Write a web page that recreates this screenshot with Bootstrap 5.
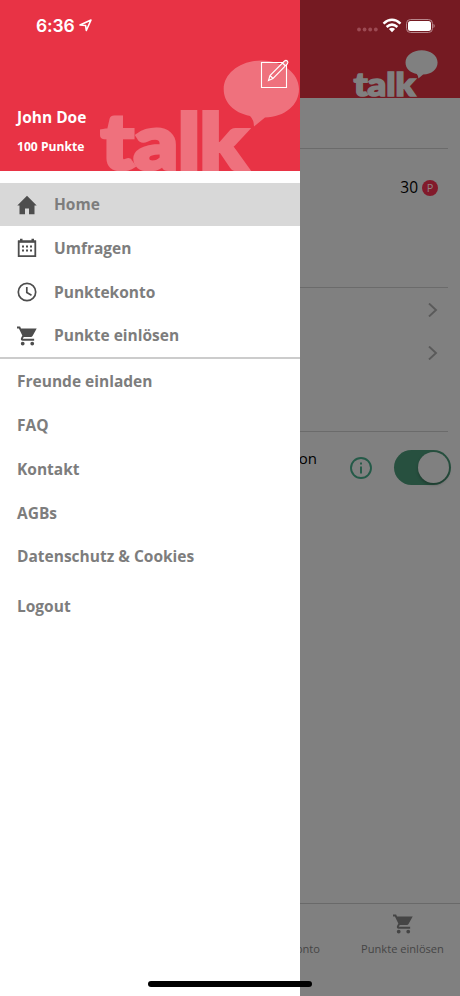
<!DOCTYPE html>
<html lang="de">
<head>
<meta charset="utf-8">
<meta name="viewport" content="width=device-width, initial-scale=1">
<title>talk</title>
<link rel="stylesheet" href="https://cdn.jsdelivr.net/npm/bootstrap@5.3.0/dist/css/bootstrap.min.css">
<style>
body{font-family:"Open Sans",sans-serif;color:#000;line-height:1.2}
svg{display:block;flex:none}
.app{width:460px;height:996px}
.statusbar{top:0;left:0;height:50px;padding:1px 24px 0 36px}
.clock{font:600 17.5px/20px Inter,"Liberation Sans",sans-serif;letter-spacing:-.1px}
.drawer{width:300px;background:#fff}
.profile{height:171px;background:#e83345;padding:0 0 17px 17px}
.profile-name{font-size:15.5px;line-height:20px;margin-bottom:11px}
.profile-points{font-size:12.1px;line-height:16px;position:relative;top:.5px}
.logo-word{font-family:Lato,"Open Sans",sans-serif;font-weight:900;font-size:76px;fill:currentColor;stroke:currentColor;stroke-width:4px}
.watermark{left:98px;top:59px}
.edit-btn{left:259px;top:58px}
.menu{padding-top:11.7px}
.menu-link{height:43.7px;padding:0 17px;font-size:15.5px;font-weight:700;color:#7d7d7d;text-decoration:none;gap:17px}
.menu-link.active{background:#d8d8d8}
.menu-link svg{color:#4d4d4d}
.menu-rule{height:1.5px;background:#ccc;margin-bottom:1px}
.logout{margin-top:6px}
.screen{width:160px;background:#808080}
.brandbar{height:98px;background:#751a22;padding:49px 22px 0 0}
.section-line{border-bottom:1px solid #6b6b6b;margin-right:12px}
.sec-empty{height:51px}
.sec-points{height:139px;padding:29px 10px 0 0;font-size:15.5px;gap:4px}
.sec-links{height:144px;padding-right:10px}
.link-line{height:43.5px}
.sec-toggle{height:71px;padding-right:9px}
.toggle-label{font-size:15px;width:17px;margin-top:-19px}
.toggle{width:57px;height:35px;border-radius:18px;background:#27503f;padding:2px;margin-left:22px}
.knob{width:31px;height:31px;border-radius:50%;background:#808080;box-shadow:0 2px 3px rgba(0,0,0,.25)}
.coin{width:16px;height:16px;border-radius:50%;background:#821a2b;color:#918184;font-size:11px;line-height:16px;margin-top:2px}
.tabs{height:93px;border-top:1px solid #696969;font-size:11.1px;color:#454545;padding-top:10px}
.tab-left{width:20px;padding-top:28px}
.tab-right{width:115px;gap:8px}
.home-indicator{left:148px;top:981px;width:164px;height:6px;border-radius:3px;background:#000}
</style>
<script src="https://cdn.jsdelivr.net/npm/bootstrap@5.3.0/dist/js/bootstrap.bundle.min.js"></script>
</head>
<body>
<svg width="0" height="0" class="position-absolute" aria-hidden="true">
  <symbol id="cart" viewBox="1 2 21 20"><path fill="currentColor" d="M7 18a2 2 0 1 0 0 4 2 2 0 0 0 0-4zM1 2v2h2l3.600 7.590-1.350 2.450C4.520 15.370 5.480 17 7 17h12v-2H7.420a.25.25 0 0 1-.25-.25l.93-1.750h7.450c.75 0 1.410-.41 1.750-1.030L21.700 4H5.210l-.94-2H1zm16 16a2 2 0 1 0 0 4 2 2 0 0 0 0-4z"/></symbol>
</svg>
<div class="app d-flex position-relative overflow-hidden">
  <aside class="drawer d-flex flex-column">
    <header class="profile position-relative overflow-hidden d-flex flex-column justify-content-end text-white fw-bold">
      <svg class="watermark position-absolute" width="202" height="113" viewBox="0 0 202 113" color="#fff" opacity=".3">
        <text class="logo-word" x="3" y="109.500" textLength="146" lengthAdjust="spacingAndGlyphs">talk</text>
        <path fill="currentColor" d="M163.500 1.500C184 1.500 201 14 201 30S187 58 167 58.500L156 67.500Q156 61 152 57C135 53.500 125.700 43 125.700 30 125.700 14 143 1.500 163.500 1.500z"/>
      </svg>
      <div class="profile-name">John Doe</div>
      <div class="profile-points">100 Punkte</div>
      <svg class="edit-btn position-absolute" width="32" height="32" fill="none" stroke="#fff" stroke-width="1.100"><path d="M2.500 4.500h25v25h-25z"/><path fill="#ee6d7a" d="M9.500 22.500l1.500-5L25.500 3q1.500-1.200 2.800 0t0 3L14 20.500zM11 17.500l3 3M23.500 5l3 3"/></svg>
    </header>
    <nav class="menu d-flex flex-column">
      <a class="menu-link active d-flex align-items-center" href="#"><svg width="20" height="20" viewBox="0 0 20 20"><path fill="currentColor" d="M10 .8l9.700 9.700h-2.200V19.200H12V13.500H8v5.700H2.500v-8.700H.3z"/></svg>Home</a>
      <a class="menu-link d-flex align-items-center" href="#"><svg width="20" height="20" viewBox="0 0 20 20"><path fill="none" stroke="currentColor" stroke-width="1.800" d="M1.700 3.300h16.600v14.800H1.700z"/><path fill="currentColor" d="M3 .8h2.500v3H3zM14.500.8H17v3h-2.500zM1 2.500h18v2.200H1zM5 7.500h2v2H5zm4 0h2v2H9zm4 0h2v2h-2zM5 11.500h2v2H5zm4 0h2v2H9zm4 0h2v2h-2z"/></svg>Umfragen</a>
      <a class="menu-link d-flex align-items-center" href="#"><svg width="20" height="20" viewBox="0 0 20 20" fill="none" stroke="currentColor" stroke-width="1.700"><circle cx="10" cy="10" r="8.700"/><path d="M9.800 5v5.500l4.700 2.700"/></svg>Punktekonto</a>
      <a class="menu-link d-flex align-items-center" href="#"><svg width="20" height="20"><use href="#cart"/></svg>Punkte einlösen</a>
      <div class="menu-rule"></div>
      <a class="menu-link d-flex align-items-center" href="#">Freunde einladen</a>
      <a class="menu-link d-flex align-items-center" href="#">FAQ</a>
      <a class="menu-link d-flex align-items-center" href="#">Kontakt</a>
      <a class="menu-link d-flex align-items-center" href="#">AGBs</a>
      <a class="menu-link d-flex align-items-center" href="#">Datenschutz &amp; Cookies</a>
      <a class="menu-link logout d-flex align-items-center" href="#">Logout</a>
    </nav>
  </aside>

  <main class="screen d-flex flex-column overflow-hidden">
    <header class="brandbar d-flex justify-content-end">
      <svg width="86" height="49" viewBox="0 0 202 115" color="#808080">
        <text class="logo-word" x="4" y="110" textLength="145" lengthAdjust="spacingAndGlyphs">talk</text>
        <path fill="currentColor" d="M163.500 3C184 3 201 15.500 201 31.500S187 59.500 167 60L156 69Q156 62.500 152 58.500C135 55 125.700 44.500 125.700 31.500 125.700 15.500 143 3 163.500 3z"/>
      </svg>
    </header>
    <section class="section-line sec-empty"></section>
    <section class="section-line sec-points d-flex justify-content-end align-items-start"><span>30</span><span class="coin text-center">P</span></section>
    <section class="section-line sec-links d-flex flex-column">
      <div class="link-line d-flex align-items-center justify-content-end"><svg width="10" height="14" fill="none" stroke="#5a5a5a" stroke-width="1.900"><path d="M1 .5L8 7 1 13.500"/></svg></div>
      <div class="link-line d-flex align-items-center justify-content-end"><svg width="10" height="14" fill="none" stroke="#5a5a5a" stroke-width="1.900"><path d="M1 .5L8 7 1 13.500"/></svg></div>
    </section>
    <section class="sec-toggle d-flex align-items-center">
      <span class="toggle-label d-flex justify-content-end">on</span>
      <svg class="ms-auto" width="22" height="22" fill="none" stroke="#245a48" stroke-width="1.900"><circle cx="11" cy="11" r="10"/><path d="M11 9.500v7M11 5.500v2"/></svg>
      <div class="toggle d-flex justify-content-end"><div class="knob"></div></div>
    </section>
    <footer class="tabs d-flex justify-content-between mt-auto">
      <div class="tab-left d-flex justify-content-end overflow-hidden">onto</div>
      <div class="tab-right d-flex flex-column align-items-center text-nowrap"><svg width="20" height="20"><use href="#cart"/></svg><span>Punkte einlösen</span></div>
    </footer>
  </main>

  <div class="statusbar position-absolute w-100 d-flex align-items-center text-white">
    <span class="clock">6:36</span>
    <svg class="ms-1" width="13" height="13" fill="none" stroke="#fff" stroke-width="1.600" stroke-linejoin="round"><path d="M1 6L12 1 7.300 11.500 6.600 6.500z"/></svg>
    <svg class="ms-auto mt-2" width="21" height="5" fill="#9c4a53"><circle cx="2" cy="2.500" r="1.900"/><circle cx="7.600" cy="2.500" r="1.900"/><circle cx="13.200" cy="2.500" r="1.900"/><circle cx="18.800" cy="2.500" r="1.900"/></svg>
    <svg class="ms-1 me-1" width="20" height="15" viewBox="0 0 20 15"><g fill="none" stroke="#fff" stroke-width="2.500"><path d="M1.500 5.600Q10-2 18.500 5.600M4.600 9Q10 4.200 15.400 9"/></g><path fill="#fff" d="M6.900 11.100Q10 8.600 13.100 11.100L10 14.300z"/></svg>
    <svg width="30" height="14"><rect x=".5" y=".5" width="26" height="13" rx="4" fill="none" stroke="#b8878c"/><rect x="2" y="2" width="23" height="10" rx="2.500" fill="#fff"/><path fill="#b8878c" d="M27.500 4.800q2.500 2.200 0 4.400z"/></svg>
  </div>
  <div class="home-indicator position-absolute"></div>
</div>
</body>
</html>
